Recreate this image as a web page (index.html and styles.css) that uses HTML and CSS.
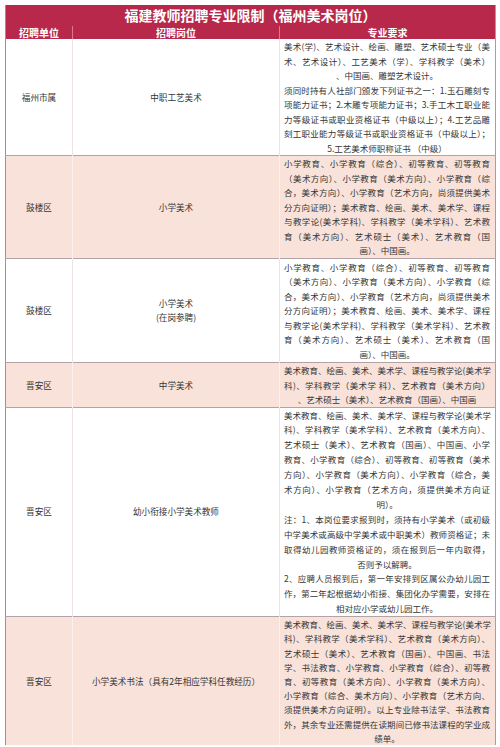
FILE: index.html
```html
<!DOCTYPE html>
<html lang="zh-CN">
<head>
<meta charset="utf-8">
<title>福建教师招聘专业限制（福州美术岗位）</title>
<link rel="stylesheet" href="styles.css">
</head>
<body>
<table class="grid">
  <colgroup>
    <col class="c-unit">
    <col class="c-post">
    <col class="c-req">
  </colgroup>
  <thead>
    <tr class="title-row"><th colspan="3">福建教师招聘专业限制（福州美术岗位）</th></tr>
    <tr class="head-row"><th>招聘单位</th><th>招聘岗位</th><th>专业要求</th></tr>
  </thead>
  <tbody>
    <tr class="r1">
      <td>福州市属</td>
      <td>中职工艺美术</td>
      <td class="req">
        <span class="ln">美术(学)、艺术设计、绘画、雕塑、艺术硕士专业（美</span>
        <span class="ln">术、艺术设计）、工艺美术（学）、学科教学（美术）</span>
        <span class="ln end">、中国画、雕塑艺术设计。</span>
        <span class="ln">须同时持有人社部门颁发下列证书之一：1.玉石雕刻专</span>
        <span class="ln">项能力证书；2.木雕专项能力证书；3.手工木工职业能</span>
        <span class="ln">力等级证书或职业资格证书（中级以上）；4.工艺品雕</span>
        <span class="ln">刻工职业能力等级证书或职业资格证书（中级以上）；</span>
        <span class="ln end">5.工艺美术师职称证书 （中级）</span>
      </td>
    </tr>
    <tr class="r2 pink">
      <td>鼓楼区</td>
      <td>小学美术</td>
      <td class="req">
        <span class="ln">小学教育、小学教育（综合）、初等教育、初等教育</span>
        <span class="ln">（美术方向）、小学教育（美术方向）、小学教育（综</span>
        <span class="ln">合，美术方向）、小学教育（艺术方向，尚须提供美术</span>
        <span class="ln">分方向证明）；美术教育、绘画、美术、美术学、课程</span>
        <span class="ln">与教学论(美术学科)、学科教学（美术学科）、艺术教</span>
        <span class="ln">育（美术方向）、艺术硕士（美术）、艺术教育（国</span>
        <span class="ln end">画）、中国画。</span>
      </td>
    </tr>
    <tr class="r3">
      <td>鼓楼区</td>
      <td>小学美术<br>(在岗参聘)</td>
      <td class="req">
        <span class="ln">小学教育、小学教育（综合）、初等教育、初等教育</span>
        <span class="ln">（美术方向）、小学教育（美术方向）、小学教育（综</span>
        <span class="ln">合，美术方向）、小学教育（艺术方向，尚须提供美术</span>
        <span class="ln">分方向证明）；美术教育、绘画、美术、美术学、课程</span>
        <span class="ln">与教学论(美术学科)、学科教学（美术学科）、艺术教</span>
        <span class="ln">育（美术方向）、艺术硕士（美术）、艺术教育（国</span>
        <span class="ln end">画）、中国画。</span>
      </td>
    </tr>
    <tr class="r4 pink">
      <td>晋安区</td>
      <td>中学美术</td>
      <td class="req">
        <span class="ln">美术教育、绘画、美术、美术学、课程与教学论(美术学</span>
        <span class="ln">科)、学科教学（美术学 科）、艺术教育（美术方向）</span>
        <span class="ln end">、艺术硕士（美术）、艺术教育（国画）、中国画</span>
      </td>
    </tr>
    <tr class="r5">
      <td>晋安区</td>
      <td>幼小衔接小学美术教师</td>
      <td class="req">
        <span class="ln">美术教育、绘画、美术、美术学、课程与教学论(美术学</span>
        <span class="ln">科)、学科教学（美术学科）、艺术教育（美术方向）、</span>
        <span class="ln">艺术硕士（美术）、艺术教育（国画）、中国画、小学</span>
        <span class="ln">教育、小学教育（综合）、初等教育、初等教育（美术</span>
        <span class="ln">方向）、小学教育（美术方向）、小学教育（综合，美</span>
        <span class="ln">术方向）、小学教育（艺术方向，须提供美术方向证</span>
        <span class="ln end">明）。</span>
        <span class="ln">注：1、本岗位要求报到时，须持有小学美术（或初级</span>
        <span class="ln">中学美术或高级中学美术或中职美术）教师资格证；未</span>
        <span class="ln">取得幼儿园教师资格证的，须在报到后一年内取得，</span>
        <span class="ln end">否则予以解聘。</span>
        <span class="ln">2、应聘人员报到后，第一年安排到区属公办幼儿园工</span>
        <span class="ln">作，第二年起根据幼小衔接、集团化办学需要，安排在</span>
        <span class="ln end">相对应小学或幼儿园工作。</span>
      </td>
    </tr>
    <tr class="r6 pink">
      <td>晋安区</td>
      <td>小学美术书法（具有2年相应学科任教经历）</td>
      <td class="req">
        <span class="ln">美术教育、绘画、美术、美术学、课程与教学论(美术学</span>
        <span class="ln">科)、学科教学（美术学科）、艺术教育（美术方向）、</span>
        <span class="ln">艺术硕士（美术）、艺术教育（国画）、中国画、书法</span>
        <span class="ln">学、书法教育、小学教育、小学教育（综合）、初等教</span>
        <span class="ln">育、初等教育（美术方向）、小学教育（美术方向）、</span>
        <span class="ln">小学教育（综合、美术方向）、小学教育（艺术方向、</span>
        <span class="ln">须提供美术方向证明）。以上专业除书法学、书法教育</span>
        <span class="ln">外，其余专业还需提供在读期间已修书法课程的学业成</span>
        <span class="ln end">绩单。</span>
      </td>
    </tr>
  </tbody>
</table>
</body>
</html>
```
FILE: styles.css
```css
html, body {
  margin: 0;
  padding: 0;
  background: #ffffff;
}
body {
  padding: 5px;
  font-family: "Noto Sans CJK SC", "Noto Sans", sans-serif;
  color: #363636;
}
.grid {
  width: 490px;
  table-layout: fixed;
  border-collapse: collapse;
  border-left: 1px solid #9c9294;
  border-right: 1px solid #a89ea0;
}
.c-unit { width: 67px; }
.c-post { width: 207px; }
.c-req { width: 216px; }

.title-row th {
  background: #b7284a;
  color: #ffffff;
  font-size: 14px;
  font-weight: 700;
  height: 21px;
  padding: 0;
  line-height: 21px;
  text-align: center;
}
.head-row th {
  background: #b7284a;
  color: #ffffff;
  font-size: 10px;
  font-weight: 700;
  height: 13px;
  line-height: 13px;
  padding: 0;
  text-align: center;
  border-left: 1px solid #d77a8c;
}
.head-row th:first-child { border-left: none; }

tbody td {
  font-size: 8.6px;
  line-height: 14.5px;
  text-align: center;
  vertical-align: middle;
  padding: 0 4px;
  border-top: 1px solid #b3a2a6;
  border-left: 1px solid #ece4e4;
}
tbody td:first-child { border-left: none; }
tbody tr:first-child td { border-top: none; }
tbody tr.pink td {
  background: #f8e2d9;
  border-left-color: #fcf1ec;
}
tbody tr.pink td:first-child { border-left: none; }

.req {
  font-size: 8.5px;
  padding: 0 5px 0 4px;
}
.ln {
  display: block;
  white-space: nowrap;
  text-align: justify;
  text-align-last: justify;
}
.ln.end {
  text-align: center;
  text-align-last: center;
}
.r3 td { padding-top: 1px; padding-bottom: 1px; }
.r5 td { line-height: 14.9px; }
.r6 td { line-height: 14.2px; }
```
